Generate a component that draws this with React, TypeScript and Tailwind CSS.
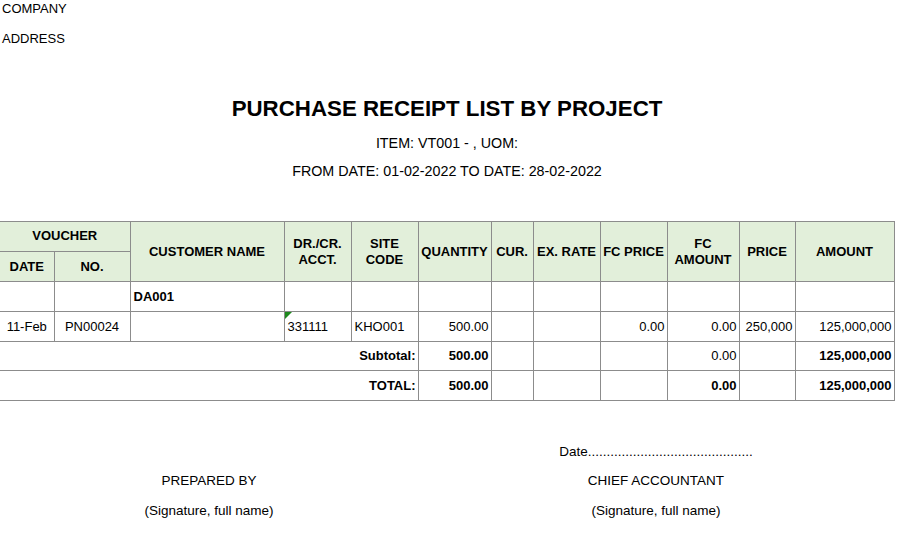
import React from 'react'

const font = { fontFamily: '"Liberation Sans", Arial, sans-serif' }

const cell = 'border border-[#8c8c8c] p-0 align-middle'
const head = `${cell} bg-[#e2efda] text-center font-bold leading-[16px]`
const num = `${cell} text-right pr-[2px]`

function Corner() {
  return (
    <svg className="absolute left-0 top-0" width="7" height="7" viewBox="0 0 7 7">
      <polygon points="0,0 7,0 0,7" fill="#1e8a1e" />
    </svg>
  )
}

export default function App() {
  return (
    <div className="w-[909px] h-[549px] bg-white text-black overflow-hidden" style={font}>
      <div className="pl-[2px] text-[13px] leading-[18px]">COMPANY</div>
      <div className="pl-[2px] mt-[12px] text-[13px] leading-[18px]">ADDRESS</div>

      <div className="w-[894px] text-center">
        <div className="mt-[48px] text-[22.3px] leading-[26px] font-bold">PURCHASE RECEIPT LIST BY PROJECT</div>
        <div className="mt-[12px] text-[14.3px] leading-[18px]">ITEM: VT001 - , UOM:</div>
        <div className="mt-[10px] text-[14.3px] leading-[18px]">FROM DATE: 01-02-2022 TO DATE: 28-02-2022</div>
      </div>

      <table className="mt-[41px] w-[894px] table-fixed border-collapse text-[13px] leading-[16px]">
        <colgroup>
          <col className="w-[54px]" />
          <col className="w-[76px]" />
          <col className="w-[154px]" />
          <col className="w-[67px]" />
          <col className="w-[67px]" />
          <col className="w-[73px]" />
          <col className="w-[42px]" />
          <col className="w-[67px]" />
          <col className="w-[67px]" />
          <col className="w-[72px]" />
          <col className="w-[56px]" />
          <col className="w-[99px]" />
        </colgroup>
        <thead>
          <tr className="h-[30px]">
            <th colSpan={2} className={`${head} border-l-0 pb-px`}>VOUCHER</th>
            <th rowSpan={2} className={head}>CUSTOMER NAME</th>
            <th rowSpan={2} className={head}>DR./CR.<br />ACCT.</th>
            <th rowSpan={2} className={head}>SITE<br />CODE</th>
            <th rowSpan={2} className={head}>QUANTITY</th>
            <th rowSpan={2} className={head}>CUR.</th>
            <th rowSpan={2} className={head}>EX. RATE</th>
            <th rowSpan={2} className={head}>FC PRICE</th>
            <th rowSpan={2} className={head}>FC<br />AMOUNT</th>
            <th rowSpan={2} className={head}>PRICE</th>
            <th rowSpan={2} className={head}>AMOUNT</th>
          </tr>
          <tr className="h-[30px]">
            <th className={`${head} border-l-0`}>DATE</th>
            <th className={head}>NO.</th>
          </tr>
        </thead>
        <tbody>
          <tr className="h-[30px]">
            <td className={`${cell} border-l-0`} />
            <td className={cell} />
            <td className={`${cell} pl-[3px] font-bold`}>DA001</td>
            <td className={cell} />
            <td className={cell} />
            <td className={cell} />
            <td className={cell} />
            <td className={cell} />
            <td className={cell} />
            <td className={cell} />
            <td className={cell} />
            <td className={cell} />
          </tr>
          <tr className="h-[30px]">
            <td className={`${cell} border-l-0 text-center`}>11-Feb</td>
            <td className={`${cell} text-center`}>PN00024</td>
            <td className={cell} />
            <td className={`${cell} relative pl-[3px]`}>
              <Corner />
              331111
            </td>
            <td className={`${cell} pl-[3px]`}>KHO001</td>
            <td className={num}>500.00</td>
            <td className={cell} />
            <td className={cell} />
            <td className={num}>0.00</td>
            <td className={num}>0.00</td>
            <td className={num}>250,000</td>
            <td className={num}>125,000,000</td>
          </tr>
          <tr className="h-[29px]">
            <td colSpan={5} className={`${num} border-l-0 font-bold`}>Subtotal:</td>
            <td className={`${num} font-bold`}>500.00</td>
            <td className={cell} />
            <td className={cell} />
            <td className={cell} />
            <td className={num}>0.00</td>
            <td className={cell} />
            <td className={`${num} font-bold`}>125,000,000</td>
          </tr>
          <tr className="h-[30px]">
            <td colSpan={5} className={`${num} border-l-0 font-bold`}>TOTAL:</td>
            <td className={`${num} font-bold`}>500.00</td>
            <td className={cell} />
            <td className={cell} />
            <td className={cell} />
            <td className={`${num} font-bold`}>0.00</td>
            <td className={cell} />
            <td className={`${num} font-bold`}>125,000,000</td>
          </tr>
        </tbody>
      </table>

      <div className="mt-[42px] grid w-[894px] grid-cols-[418px_476px] text-[13.5px] leading-[18px] text-center">
        <div />
        <div>Date............................................</div>
        <div className="mt-[11px]">PREPARED BY</div>
        <div className="mt-[11px]">CHIEF ACCOUNTANT</div>
        <div className="mt-[12px]">(Signature, full name)</div>
        <div className="mt-[12px]">(Signature, full name)</div>
      </div>
    </div>
  )
}
